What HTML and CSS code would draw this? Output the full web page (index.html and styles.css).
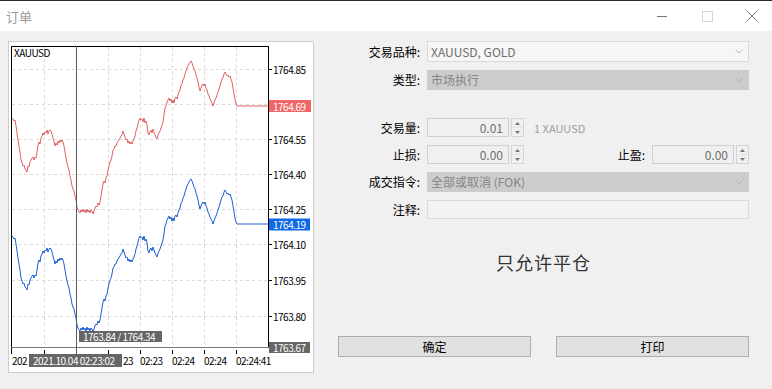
FILE: index.html
```html
<!DOCTYPE html>
<html>
<head>
    <meta charset="utf-8">
    <title>订单</title>
    <link rel="stylesheet" href="styles.css">
</head>
<body>
    <div class="window">
        <div class="title-bar">
            <span class="title">订单</span>
            <div class="window-controls">
                <span class="win-btn">
                    <svg width="10" height="10" viewBox="0 0 10 10"><line x1="0" y1="5.5" x2="10" y2="5.5" stroke="#777" /></svg>
                </span>
                <span class="win-btn">
                    <svg width="11" height="11" viewBox="0 0 11 11"><rect x="0.5" y="0.5" width="10" height="10" fill="none" stroke="#d6d6d6" /></svg>
                </span>
                <span class="win-btn">
                    <svg width="12" height="12" viewBox="0 0 12 12"><path d="M0.5 0.5 L11.5 11.5 M11.5 0.5 L0.5 11.5" stroke="#777" fill="none" /></svg>
                </span>
            </div>
        </div>

        <div class="content">
            <!-- tick chart -->
            <div class="chart-panel">
                <svg class="chart" width="304" height="330" viewBox="9 42 304 330">
                    <defs>
                        <polyline id="tick-line" fill="none" points="12,118 13,119 14,121 15,120 16,126 17,133 18,140 19,146 20,152 21,160 22,163 23,166 24,165 25,169 26,170 27,172 28,166 29,167 30,162 31,160 32,158 33,157 34,160 35,157 36,158 37,152 38,145 39,142 40,144 41,138 42,136 43,133 44,135 45,132 46,133 47,130 48,134 49,131 50,130 51,131 52,134 53,138 54,142 55,146 56,143 57,145 58,141 59,143 60,140 61,142 62,140 63,142 64,146 65,152 66,158 67,163 68,167 69,170 70,176 71,180 72,186 73,189 74,191 75,196 76,200 77,207 78,210 79,212 80,213 81,210 82,212 83,209 84,212 85,210 86,213 87,209 88,212 89,210 90,213 91,210 92,211 93,214 94,211 95,208 96,206 97,207 98,203 99,205 100,202 101,196 102,190 103,184 104,181 105,183 106,178 107,176 108,170 109,166 110,162 111,160 112,156 113,150 114,149 115,146 116,146 117,143 118,141 119,140 120,138 121,136 122,135 123,131 124,134 125,137 126,140 127,139 128,143 129,141 130,144 131,142 132,144 133,141 134,139 135,136 136,131 137,128 138,124 139,120 140,118 141,120 142,119 143,122 144,118 145,123 146,121 147,125 148,133 149,135 150,131 151,130 152,133 153,129 154,132 155,135 156,137 157,139 158,135 159,133 160,131 161,128 162,125 163,122 164,115 165,108 166,106 167,102 168,100 169,98 170,101 171,99 172,103 173,100 174,103 175,98 176,97 177,99 178,95 179,92 180,90 181,85 182,84 183,80 184,78 185,74 186,71 187,68 188,66 189,64 190,62 191,61 192,63 193,66 194,69 195,71 196,75 197,78 198,82 199,87 200,91 201,88 202,85 203,84 204,86 205,84 206,88 207,90 208,94 209,96 210,99 211,101 212,103 213,106 214,103 215,100 216,98 217,95 218,92 219,89 220,86 221,82 222,79 223,78 224,74 225,72 226,74 227,76 228,75 229,77 230,76 231,79 232,82 233,88 234,94 235,100 236,104 237,106 268,106" />
                    </defs>

                    <g stroke="#dadada" stroke-dasharray="3 3" shape-rendering="crispEdges">
                        <line x1="12" y1="69.5" x2="268" y2="69.5" />
                        <line x1="12" y1="104.5" x2="268" y2="104.5" />
                        <line x1="12" y1="139.5" x2="268" y2="139.5" />
                        <line x1="12" y1="174.5" x2="268" y2="174.5" />
                        <line x1="12" y1="209.5" x2="268" y2="209.5" />
                        <line x1="12" y1="244.5" x2="268" y2="244.5" />
                        <line x1="12" y1="280.5" x2="268" y2="280.5" />
                        <line x1="12" y1="316.5" x2="268" y2="316.5" />
                        <line x1="44.5" y1="47" x2="44.5" y2="347" />
                        <line x1="108.5" y1="47" x2="108.5" y2="347" />
                        <line x1="140.5" y1="47" x2="140.5" y2="347" />
                        <line x1="172.5" y1="47" x2="172.5" y2="347" />
                        <line x1="204.5" y1="47" x2="204.5" y2="347" />
                        <line x1="236.5" y1="47" x2="236.5" y2="347" />
                    </g>

                    <!-- ask (red) and bid (blue) -->
                    <use href="#tick-line" class="ask-line" />
                    <use href="#tick-line" class="bid-line" transform="translate(0 118)" />

                    <!-- frame -->
                    <g stroke="#000" shape-rendering="crispEdges">
                        <line x1="11.5" y1="46" x2="11.5" y2="354" />
                        <line x1="11" y1="46.5" x2="269" y2="46.5" />
                        <line x1="268.5" y1="46" x2="268.5" y2="348" />
                        <line x1="268" y1="69.5" x2="272" y2="69.5" />
                        <line x1="268" y1="139.5" x2="272" y2="139.5" />
                        <line x1="268" y1="174.5" x2="272" y2="174.5" />
                        <line x1="268" y1="209.5" x2="272" y2="209.5" />
                        <line x1="268" y1="244.5" x2="272" y2="244.5" />
                        <line x1="268" y1="280.5" x2="272" y2="280.5" />
                        <line x1="268" y1="316.5" x2="272" y2="316.5" />
                        <line x1="44.5" y1="350" x2="44.5" y2="354" />
                        <line x1="108.5" y1="350" x2="108.5" y2="354" />
                        <line x1="140.5" y1="350" x2="140.5" y2="354" />
                        <line x1="172.5" y1="350" x2="172.5" y2="354" />
                        <line x1="204.5" y1="350" x2="204.5" y2="354" />
                        <line x1="236.5" y1="350" x2="236.5" y2="354" />
                    </g>
                    <line x1="11" y1="347.5" x2="269" y2="347.5" stroke="#7a7a7a" shape-rendering="crispEdges" />
                    <line x1="76.5" y1="46" x2="76.5" y2="354" stroke="#5a5a5a" shape-rendering="crispEdges" />

                    <text x="14" y="52.5">XAUUSD</text>

                    <g class="axis">
                        <text x="273" y="69.5">1764.85</text>
                        <text x="273" y="139.5">1764.55</text>
                        <text x="273" y="174.5">1764.40</text>
                        <text x="273" y="209.5">1764.25</text>
                        <text x="273" y="244.5">1764.10</text>
                        <text x="273" y="280.5">1763.95</text>
                        <text x="273" y="316.5">1763.80</text>

                        <text x="12" y="360.5">202</text>
                        <text x="123" y="360.5">23</text>
                        <text x="140" y="360.5">02:23</text>
                        <text x="172" y="360.5">02:24</text>
                        <text x="204" y="360.5">02:24</text>
                        <text x="236" y="360.5">02:24:41</text>
                    </g>

                    <rect x="269" y="100" width="42" height="12" fill="#f06666" />
                    <text x="273" y="106.5" class="tag">1764.69</text>
                    <rect x="269" y="218.5" width="41" height="12" fill="#0f6ae4" />
                    <text x="273" y="224.5" class="tag">1764.19</text>
                    <rect x="269" y="342" width="41" height="11" fill="#666" />
                    <text x="273" y="347.5" class="tag">1763.67</text>

                    <rect x="79" y="331" width="83" height="11" fill="#666" />
                    <text x="83" y="336.5" class="tag">1763.84 / 1764.34</text>
                    <rect x="29" y="354" width="93" height="13" fill="#666" />
                    <text x="33" y="360.5" class="tag">2021.10.04 02:23:02</text>
                </svg>
            </div>

            <div class="order-form">
                <div class="form-row">
                    <span class="field-label">交易品种:</span>
                    <div class="combo combo-symbol">
                        <span class="combo-text">XAUUSD, GOLD</span>
                        <span class="combo-arrow">
                            <svg width="8" height="5" viewBox="0 0 8 5"><polyline points="0.5,0.5 4,4 7.5,0.5" fill="none" stroke="#b9b9b9" /></svg>
                        </span>
                    </div>
                </div>

                <div class="form-row">
                    <span class="field-label">类型:</span>
                    <div class="combo combo-disabled">
                        <span class="combo-text">市场执行</span>
                        <span class="combo-arrow">
                            <svg width="8" height="5" viewBox="0 0 8 5"><polyline points="0.5,0.5 4,4 7.5,0.5" fill="none" stroke="#b4b4b4" /></svg>
                        </span>
                    </div>
                </div>

                <div class="form-row row-volume">
                    <span class="field-label">交易量:</span>
                    <div class="spin-box">
                        <span class="spin-input">0.01</span>
                        <span class="spin-buttons">
                            <span class="spin-half"><svg width="5" height="3" viewBox="0 0 5 3"><polygon points="2.5,0 5,3 0,3" fill="#777" /></svg></span>
                            <span class="spin-half"><svg width="5" height="3" viewBox="0 0 5 3"><polygon points="0,0 5,0 2.5,3" fill="#777" /></svg></span>
                        </span>
                    </div>
                    <span class="volume-unit">1 XAUUSD</span>
                </div>

                <div class="form-row">
                    <span class="field-label">止损:</span>
                    <div class="spin-box">
                        <span class="spin-input">0.00</span>
                        <span class="spin-buttons">
                            <span class="spin-half"><svg width="5" height="3" viewBox="0 0 5 3"><polygon points="2.5,0 5,3 0,3" fill="#777" /></svg></span>
                            <span class="spin-half"><svg width="5" height="3" viewBox="0 0 5 3"><polygon points="0,0 5,0 2.5,3" fill="#777" /></svg></span>
                        </span>
                    </div>
                    <span class="spacer"></span>
                    <span class="inline-label">止盈:</span>
                    <div class="spin-box">
                        <span class="spin-input">0.00</span>
                        <span class="spin-buttons">
                            <span class="spin-half"><svg width="5" height="3" viewBox="0 0 5 3"><polygon points="2.5,0 5,3 0,3" fill="#777" /></svg></span>
                            <span class="spin-half"><svg width="5" height="3" viewBox="0 0 5 3"><polygon points="0,0 5,0 2.5,3" fill="#777" /></svg></span>
                        </span>
                    </div>
                </div>

                <div class="form-row">
                    <span class="field-label">成交指令:</span>
                    <div class="combo combo-disabled">
                        <span class="combo-text">全部或取消 (FOK)</span>
                        <span class="combo-arrow">
                            <svg width="8" height="5" viewBox="0 0 8 5"><polyline points="0.5,0.5 4,4 7.5,0.5" fill="none" stroke="#b4b4b4" /></svg>
                        </span>
                    </div>
                </div>

                <div class="form-row">
                    <span class="field-label">注释:</span>
                    <div class="comment-input"></div>
                </div>

                <div class="notice">只允许平仓</div>

                <div class="button-row">
                    <button class="dialog-button">确定</button>
                    <button class="dialog-button">打印</button>
                </div>
            </div>
        </div>
    </div>
</body>
</html>
```

FILE: styles.css
```css
body {
    margin: 0;
    padding: 0;
    background-color: #f0f0f0;
    font-family: "Noto Sans CJK SC", "Noto Sans", sans-serif;
    font-size: 12px;
    color: #000;
}

.window {
    width: 772px;
    height: 389px;
    overflow: hidden;
    border-top: 1px solid #2b2b2b;
    box-sizing: border-box;
}

.title-bar {
    height: 30px;
    background-color: #fff;
    display: flex;
    align-items: center;
    justify-content: space-between;
}

.title {
    margin-left: 6px;
    font-size: 13px;
    color: #9a9a9a;
}

.window-controls {
    display: flex;
    gap: 5px;
}

.win-btn {
    width: 40px;
    height: 30px;
    display: flex;
    align-items: center;
    justify-content: center;
}

.content {
    display: flex;
    align-items: flex-start;
    padding: 10px 0 0 8px;
}

/* chart */
.chart-panel {
    width: 304px;
    height: 330px;
    border: 1px solid #cdcdcd;
    background-color: #fff;
}

.chart {
    display: block;
}

.chart text {
    font-family: "Noto Sans CJK SC", "Noto Sans", sans-serif;
    font-size: 10px;
    letter-spacing: -0.5px;
    fill: #000;
    dominant-baseline: central;
}

.chart .tag {
    fill: #fff;
}

.ask-line {
    stroke: #e06262;
}

.bid-line {
    stroke: #1c5fd4;
}

/* order form */
.order-form {
    width: 411px;
    margin-left: 24px;
    display: flex;
    flex-direction: column;
}

.form-row {
    display: flex;
    align-items: center;
    margin-top: 8px;
}

.form-row:first-child {
    margin-top: 0;
}

.form-row.row-volume {
    margin-top: 28px;
}

.field-label {
    width: 82px;
    padding-right: 7px;
    text-align: right;
    line-height: 16px;
}

.inline-label {
    padding-right: 7px;
    line-height: 16px;
}

.spacer {
    flex: 1;
}

.combo {
    flex: 1;
    height: 20px;
    box-sizing: border-box;
    display: flex;
    align-items: center;
    border: 1px solid #d9d9d9;
}

.combo-symbol {
    height: 21px;
    background-color: #f6f6f6;
    color: #6e6e6e;
}

.combo-disabled {
    background-color: #cccccc;
    border-color: #cccccc;
    color: #858585;
}

.combo-text {
    flex: 1;
    padding-left: 3px;
    line-height: 16px;
}

.combo-arrow {
    width: 18px;
    display: flex;
    justify-content: center;
}

.spin-box {
    display: flex;
    align-items: center;
}

.spin-input {
    width: 82px;
    height: 19px;
    box-sizing: border-box;
    border: 1px solid #cfcfcf;
    background-color: #f0f0f0;
    color: #6e6e6e;
    text-align: right;
    padding-right: 5px;
    line-height: 17px;
}

.spin-buttons {
    width: 13px;
    height: 19px;
    box-sizing: border-box;
    margin-left: 2px;
    border: 1px solid #d4d4d4;
    display: flex;
    flex-direction: column;
}

.spin-half {
    flex: 1;
    display: flex;
    align-items: center;
    justify-content: center;
}

.spin-half:first-child {
    border-bottom: 1px solid #e2e2e2;
}

.spin-half svg {
    display: block;
}

.volume-unit {
    margin-left: 10px;
    font-size: 11px;
    color: #9c9c9c;
}

.comment-input {
    flex: 1;
    height: 19px;
    box-sizing: border-box;
    border: 1px solid #d9d9d9;
    background-color: #f3f3f3;
}

.notice {
    margin-top: 31px;
    line-height: 24px;
    font-size: 18px;
    letter-spacing: 1px;
    text-align: center;
    color: #333;
}

.button-row {
    display: flex;
    justify-content: space-between;
    margin-top: 62px;
}

.dialog-button {
    width: 193px;
    height: 21px;
    padding: 0;
    background-color: #e1e1e1;
    border: 1px solid #adadad;
    font-family: "Noto Sans CJK SC", "Noto Sans", sans-serif;
    font-size: 12px;
    color: #000;
}
```
